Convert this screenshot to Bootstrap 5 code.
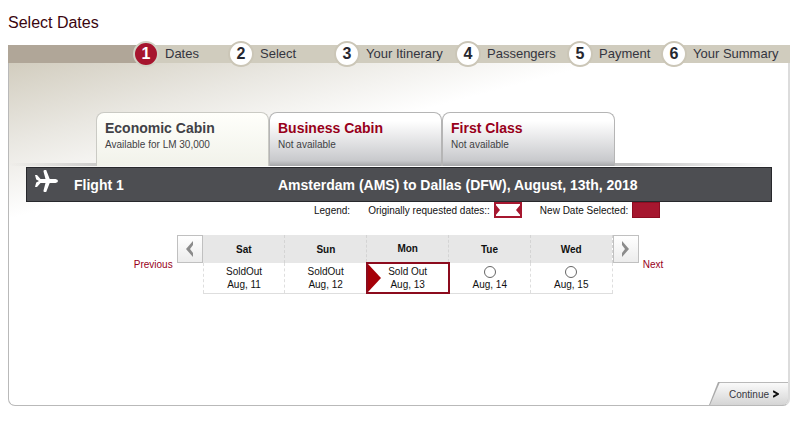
<!DOCTYPE html>
<html lang="en">
<head>
<meta charset="utf-8">
<meta name="viewport" content="width=device-width, initial-scale=1">
<title>Select Dates</title>
<link href="https://cdn.jsdelivr.net/npm/bootstrap@5.3.0/dist/css/bootstrap.min.css" rel="stylesheet">
<style>
body{font-family:"Liberation Sans",Arial,sans-serif;font-size:10px;line-height:13px;color:#111;background:#fff;padding:13px 10px 8px 8px}
a{text-decoration:none}
h1{font-size:16px;line-height:20px;color:#3a0610;font-weight:400;margin-bottom:12px}
.steps{display:grid;grid-template-columns:125fr 95fr 106fr 121fr 112fr 94fr 129fr;grid-template-rows:18px;background:linear-gradient(90deg,#b0a698 17%,#d0ccbe 17%)}
.steps li{min-width:0;white-space:nowrap;font-size:13px;line-height:18px;color:#343540;gap:6px}
.num{width:26px;height:26px;border:2px solid #cbc6b7;background:#fff;font-size:16px;line-height:22px;flex:none;color:#26272f}
.step-on .num{background:#a6152e;color:#fff;border-color:#d2d3c6}
.panel{border:1px solid #b9b9b9;border-right:2px solid #dcdcdc;border-top:0;border-radius:0 0 7px 7px;padding-top:49px;background:linear-gradient(to bottom right,#d2cdbf,#e9e7e1 25%,#fff 50%) no-repeat 0 0/76% 156px}
.cabins{padding-left:87px;height:54px;background:linear-gradient(90deg,#9990 0,#9999 15%,#9999 80%,#9990 98%) no-repeat 0 100%/100% 3px}
.cabin{flex:0 1 173px;border:1px solid #b5b5b5;border-bottom:0;border-radius:8px 8px 0 0;padding:6px 8px 0;background:linear-gradient(#fff 15%,#c8c9cc 90%,#a6a7a9);color:#444;text-align:left}
.cabin strong{font-size:14px;line-height:18px;color:#98001a}
.cabin span{font-size:10px;line-height:16px;color:#3f3f44}
.cabin.chosen{background:linear-gradient(#fffffb,#f1f2ea);border-color:#cacac4}
.cabin.chosen strong{color:#414146}
.flight{margin:1px 16px 0 17px;height:35px;background:#4d4e52;border:1px solid #27282c;color:#fff;font-size:14px;line-height:20px;font-weight:700}
.flight-name{flex:0 0 235px}
.legend-row{padding-right:16.4%;height:16px}
.gap-after{margin-right:18px}
.swatch-new{width:28px;height:16px;background:#a6172f;border:1px solid #8d0d22}
.calendar{margin-top:17px}
.move{width:26px;height:28px;border:1px solid #c0c0c0;background:linear-gradient(#fff,#ececec);padding:0}
.days{width:410px;table-layout:fixed;text-align:center}
.days th{height:28px;background:#e7e7e7;border:1px dashed #d4d4d4;border-width:0 1px 0 0;text-align:center;padding:0}
.days td{height:30px;border:1px dashed #dedede;border-width:0 1px 1px;padding:0;border-bottom-style:solid}
.days td.picked{border:2px solid #8c0b1d;position:relative}
.picked svg{position:absolute;left:0;top:0}
.days input{appearance:none;width:12px;height:12px;border:1px solid #666;border-radius:50%;background:#fff;display:block;margin:1px auto 0}
.red{color:#98001a;line-height:11px}
.continue{margin-top:88px}
.slant{background:#aaa;clip-path:polygon(9px 0,100% 0,100% 100%,0 100%);padding-left:1px;border-radius:0 0 6px 0}
.slant button{width:78px;height:23px;border:0;padding:0 9px 0 19px;background:linear-gradient(#fafafa,#d5d5d5);clip-path:polygon(10px 0,100% 0,100% 100%,0 100%);border-radius:0 0 6px 0;color:#37373f;border-top:1px solid #b9b9b9}
</style>
<script src="https://cdn.jsdelivr.net/npm/bootstrap@5.3.0/dist/js/bootstrap.bundle.min.js"></script>
</head>
<body>
<main>
<h1>Select Dates</h1>
<ol class="steps list-unstyled mb-0">
  <li aria-hidden="true"></li>
  <li class="step-on d-flex align-items-center"><b class="num rounded-circle text-center">1</b>Dates</li>
  <li class="d-flex align-items-center"><b class="num rounded-circle text-center">2</b>Select</li>
  <li class="d-flex align-items-center"><b class="num rounded-circle text-center">3</b>Your Itinerary</li>
  <li class="d-flex align-items-center"><b class="num rounded-circle text-center">4</b>Passengers</li>
  <li class="d-flex align-items-center"><b class="num rounded-circle text-center">5</b>Payment</li>
  <li class="d-flex align-items-center"><b class="num rounded-circle text-center">6</b>Your Summary</li>
</ol>
<section class="panel">
  <div class="cabins d-flex">
    <button type="button" class="cabin chosen d-flex flex-column"><strong>Economic Cabin</strong><span>Available for LM 30,000</span></button>
    <button type="button" class="cabin d-flex flex-column"><strong>Business Cabin</strong><span>Not available</span></button>
    <button type="button" class="cabin d-flex flex-column"><strong>First Class</strong><span>Not available</span></button>
  </div>
  <div class="flight d-flex align-items-center">
    <div class="flight-name d-flex align-items-center ms-2">
      <svg class="me-3 mb-2" width="23" height="22" viewBox="0 0 23 22" aria-hidden="true"><path fill="#fff" d="M0 5h2l3.500 4h5L8.500 1.500Q8.300 0 9.500 0h1.700l3.500 9h5.800q2.500.3 2.500 2t-2.500 2h-5.800l-3.500 9H9.500q-1.200 0-1-1.500l2-7.500h-5L2 17H0l1.200-4.500L4 11 1.200 9.500z"/></svg>
      Flight 1
    </div>
    <div class="ps-2">Amsterdam (AMS) to Dallas (DFW), August, 13th, 2018</div>
  </div>
  <div class="legend-row d-flex justify-content-end align-items-center">
    <span class="gap-after">Legend:</span>
    <span class="me-1">Originally requested dates::</span>
    <svg class="gap-after" width="28" height="16" viewBox="0 0 28 16" aria-hidden="true"><path fill="#fff" stroke="#a6172f" stroke-width="2" d="M1 1h26v14H1z"/><path fill="#a6172f" d="M1 2l5 6-5 6zM27 2l-5 6 5 6z"/></svg>
    <span class="me-1">New Date Selected:</span>
    <span class="swatch-new"></span>
  </div>
  <div class="calendar d-flex justify-content-center align-items-start">
    <a href="#" class="red mt-4 me-1">Previous</a>
    <button type="button" class="move" aria-label="Previous days"><svg width="9" height="16" viewBox="0 0 9 16"><path fill="#8b8b8b" d="M8 0v4L5 8l3 4v4L1 8z"/></svg></button>
    <table class="days">
      <thead><tr><th scope="col">Sat</th><th scope="col">Sun</th><th scope="col">Mon</th><th scope="col">Tue</th><th scope="col">Wed</th></tr></thead>
      <tbody><tr>
        <td>SoldOut<br>Aug, 11</td>
        <td>SoldOut<br>Aug, 12</td>
        <td class="picked"><svg width="13" height="28" viewBox="0 0 13 28" aria-hidden="true"><path fill="#a50008" d="M0 0l13 14L0 28z"/></svg>Sold Out<br>Aug, 13</td>
        <td><input type="radio" name="day" id="d14"><label for="d14">Aug, 14</label></td>
        <td><input type="radio" name="day" id="d15"><label for="d15">Aug, 15</label></td>
      </tr></tbody>
    </table>
    <button type="button" class="move" aria-label="Next days"><svg width="9" height="16" viewBox="0 0 9 16"><path fill="#8b8b8b" d="M1 0v4l3 4-3 4v4l7-8z"/></svg></button>
    <a href="#" class="red mt-4 ms-1">Next</a>
  </div>
  <div class="continue d-flex justify-content-end">
    <div class="slant"><button type="submit" class="d-flex align-items-center justify-content-between">Continue <svg width="6" height="8" viewBox="0 0 6 8" aria-hidden="true"><path fill="none" stroke="#111" stroke-width="2" d="M0 1l5 3-5 3"/></svg></button></div>
  </div>
</section>
</main>
</body>
</html>
